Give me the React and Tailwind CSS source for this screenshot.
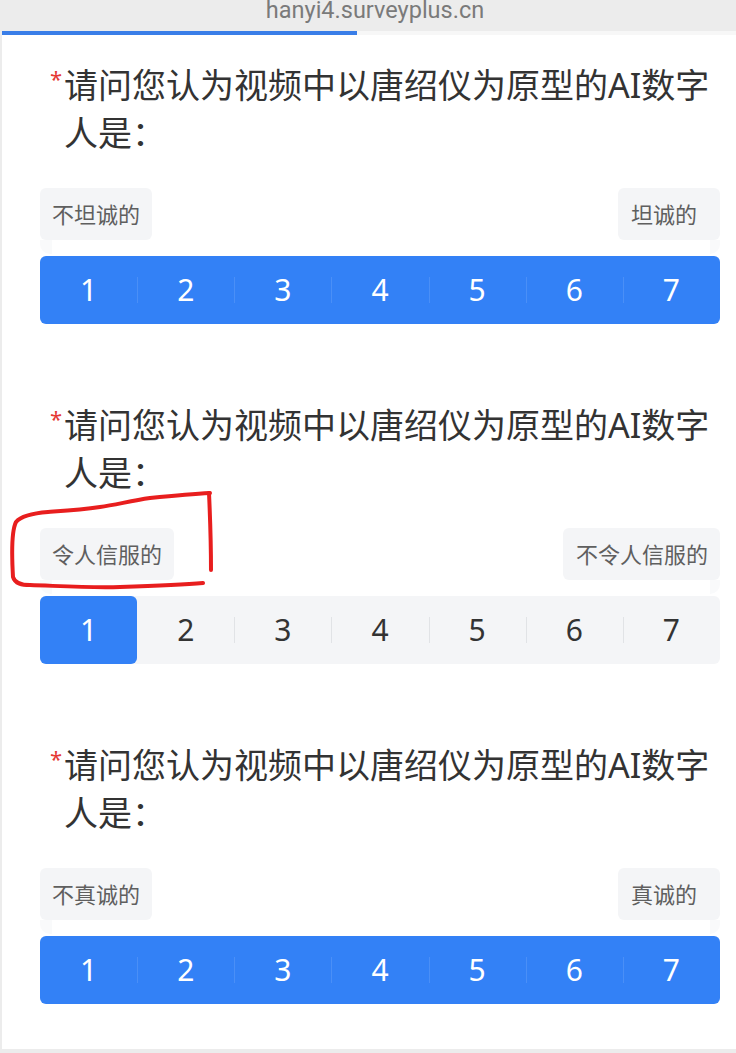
import React, { useState } from 'react'

const questions = [
  { left: '不坦诚的', right: '坦诚的', value: 'all' },
  { left: '令人信服的', right: '不令人信服的', value: 1 },
  { left: '不真诚的', right: '真诚的', value: 'all' },
]

function Scale({ value }) {
  const nums = [1, 2, 3, 4, 5, 6, 7]
  const all = value === 'all'
  return (
    <div className={all ? 'flex h-[68px] rounded-[6px] bg-[#3381f6]' : 'flex h-[68px] rounded-[6px] bg-[#f4f5f7]'}>
      {nums.map((n, i) => {
        const on = !all && n === value
        return (
          <div key={n} className="relative flex flex-1 items-center justify-center">
            {on && <div className="absolute inset-0 rounded-[6px] bg-[#3381f6]"></div>}
            {i > 0 && !on && value !== n - 1 && (
              <div className={all ? 'absolute left-0 top-[21px] h-[26px] w-px bg-[#4a8ff7]' : 'absolute left-0 top-[21px] h-[26px] w-px bg-[#e1e3e6]'}></div>
            )}
            <span className={all || on ? 'relative text-[30px] leading-none text-white' : 'relative text-[30px] leading-none text-[#333]'}>{n}</span>
          </div>
        )
      })}
    </div>
  )
}

function Question({ q }) {
  return (
    <div className="pb-[77px]">
      <div className="flex pl-[10px]">
        <span className="mt-[6px] w-[14px] text-[22px] leading-[22px] text-[#e53935]">*</span>
        <p className="flex-1 text-[34px] leading-[48px] text-[#333]">请问您认为视频中以唐绍仪为原型的AI数字人是：</p>
      </div>
      <div className="mt-[31px] flex justify-between">
        <div className="relative">
          <div className="rounded-[6px] bg-[#f4f5f7] px-3 py-3 text-[22px] leading-[28px] text-[#5f5f5f]">{q.left}</div>
          <div className="absolute left-0 top-[52px] h-[14px] w-[12px] rounded-bl-[10px] bg-[#f9fafb]"></div>
        </div>
        <div className="relative">
          <div className="min-w-[102px] rounded-[6px] bg-[#f4f5f7] py-3 pl-[13px] pr-3 text-[22px] leading-[28px] text-[#5f5f5f]">{q.right}</div>
          <div className="absolute right-0 top-[52px] h-[14px] w-[10px] rounded-br-[10px] bg-[#f9fafb]"></div>
        </div>
      </div>
      <div className="mt-[16px]">
        <Scale value={q.value} />
      </div>
    </div>
  )
}

export default function App() {
  const [progress] = useState(355)
  return (
    <div className="relative min-h-[1053px] bg-[#ececec]" style={{ fontFamily: '"Noto Sans", "Noto Sans CJK SC", sans-serif' }}>
      {/* browser url bar */}
      <div className="h-[31px] overflow-hidden text-center">
        <p className="-mt-[3px] pl-[14px] text-[23.5px] leading-[26px] text-[#7a7a7a]" style={{ fontFamily: 'Roboto, sans-serif' }}>hanyi4.surveyplus.cn</p>
      </div>
      <div className="ml-[2px] h-[4px] bg-[#f7f7f7]">
        <div className="h-[4px] bg-[#3a7ee8]" style={{ width: progress + 'px' }}></div>
      </div>
      {/* survey */}
      <div className="ml-[2px] h-[1014px] overflow-hidden bg-white pl-[38px] pr-[16px] pt-[26px]">
        {questions.map((q, i) => (
          <Question key={i} q={q} />
        ))}
      </div>
      {/* red hand drawn mark */}
      <svg className="pointer-events-none absolute left-0 top-0" width="736" height="1053">
        <path d="M210 493 C 190 494, 170 496, 150 498 C 130 501, 115 505, 100 507 C 80 510, 62 511, 48 512 C 35 513, 22 515, 16 522 C 11 532, 12 560, 13 577 C 15 584, 22 585, 30 585 C 60 586, 90 588, 120 587 C 150 586, 180 585, 203 583" fill="none" stroke="#e81e1e" strokeWidth="4" strokeLinecap="round" />
        <path d="M209 493 C 210 515, 211 545, 211 570" fill="none" stroke="#e81e1e" strokeWidth="4" strokeLinecap="round" />
      </svg>
    </div>
  )
}
